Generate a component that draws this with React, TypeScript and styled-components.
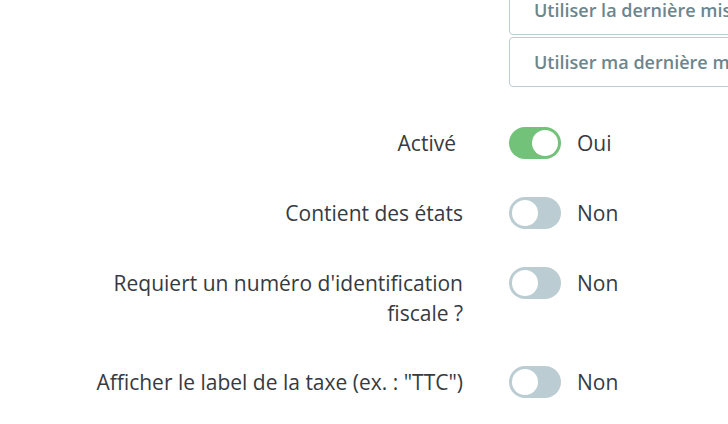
import React from 'react'
import styled, { createGlobalStyle } from 'styled-components'

const GlobalStyle = createGlobalStyle`
  html, body {
    margin: 0;
    padding: 0;
    background: #ffffff;
    overflow: hidden;
  }
  body {
    font-family: "Open Sans", "Noto Sans", "Liberation Sans", sans-serif;
    color: #363a41;
  }
`

const Page = styled.div`
  margin-top: -15px;
  padding-left: 83px;
  width: 900px;
`

const Row = styled.div`
  display: flex;
  align-items: flex-start;
  margin-bottom: 38px;
`

const Label = styled.div<{ $trail?: number }>`
  width: 380px;
  flex: none;
  box-sizing: border-box;
  padding-top: 1px;
  padding-right: ${p => p.$trail || 0}px;
  text-align: right;
  font-size: 21px;
  line-height: 30px;
  color: #363a41;
`

const Control = styled.div`
  margin-left: 46px;
  display: flex;
  align-items: center;
  min-height: 32px;
`

const ButtonStack = styled.div`
  display: flex;
  flex-direction: column;
  gap: 2px;
`

const ChoiceButton = styled.button`
  width: 360px;
  height: 50px;
  box-sizing: border-box;
  padding: 0 24px;
  border: 1px solid #bbcdd2;
  border-radius: 4px;
  background: #ffffff;
  color: #6c868e;
  font-family: "Open Sans", "Noto Sans", sans-serif;
  font-size: 18px;
  font-weight: 600;
  text-align: left;
  white-space: nowrap;
  overflow: hidden;
  cursor: pointer;
`

const Track = styled.span<{ $on: boolean }>`
  position: relative;
  display: inline-block;
  width: 52px;
  height: 32px;
  border-radius: 16px;
  background: ${p => (p.$on ? '#72c279' : '#bbcdd2')};
  flex: none;
`

const Knob = styled.span<{ $on: boolean }>`
  position: absolute;
  top: 3px;
  left: ${p => (p.$on ? '23px' : '3px')};
  width: 26px;
  height: 26px;
  border-radius: 50%;
  background: #ffffff;
`

const State = styled.span`
  margin-left: 16px;
  font-size: 21px;
  line-height: 30px;
  color: #363a41;
`

type SwitchProps = { on: boolean }

const Switch = ({ on }: SwitchProps) => (
  <>
    <Track $on={on}>
      <Knob $on={on} />
    </Track>
    <State>{on ? 'Oui' : 'Non'}</State>
  </>
)

const rows = [
  { label: 'Activé', on: true, trail: 7 },
  { label: 'Contient des états', on: false },
  { label: "Requiert un numéro d'identification fiscale ?", on: false },
  { label: 'Afficher le label de la taxe (ex. : "TTC")', on: false },
]

export default function App() {
  return (
    <>
      <GlobalStyle />
      <Page>
        <Row style={{ marginBottom: 40 }}>
          <Label />
          <Control>
            <ButtonStack>
              <ChoiceButton>Utiliser la dernière mise en page</ChoiceButton>
              <ChoiceButton>Utiliser ma dernière mise en page</ChoiceButton>
            </ButtonStack>
          </Control>
        </Row>
        {rows.map(r => (
          <Row key={r.label}>
            <Label $trail={r.trail}>{r.label}</Label>
            <Control>
              <Switch on={r.on} />
            </Control>
          </Row>
        ))}
      </Page>
    </>
  )
}
